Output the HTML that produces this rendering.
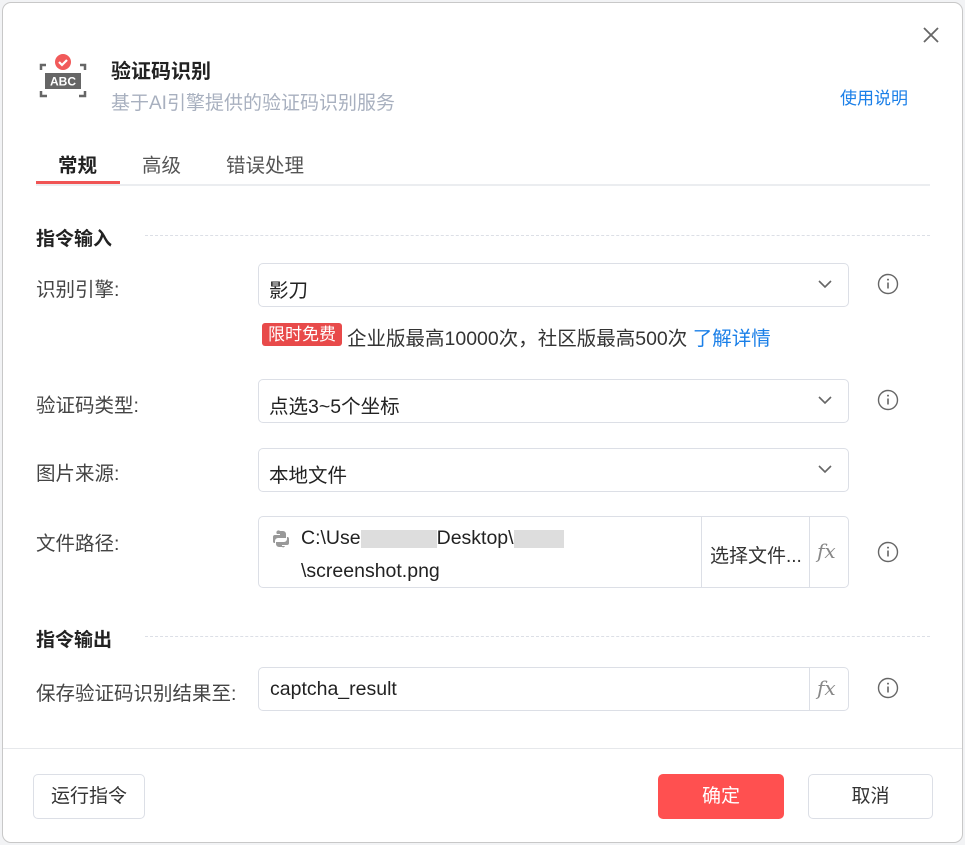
<!DOCTYPE html>
<html><head><meta charset="utf-8"><style>
*{box-sizing:border-box;margin:0;padding:0}
body{width:965px;height:845px;background:#f2f3f5;font-family:"Liberation Sans","Noto Sans CJK SC",sans-serif;color:#333;position:relative;overflow:hidden}
.dlg{position:absolute;left:2px;top:2px;width:961px;height:841px;background:#fff;border:1px solid #c8c8c8;border-radius:9px}
.a{position:absolute;white-space:nowrap}
.box{position:absolute;left:258px;width:591px;border:1px solid #dcdfe6;border-radius:5px;background:#fff}
.lbl{position:absolute;left:36px;font-size:19.5px;color:#444}
.val{position:absolute;left:10px;font-size:19.5px;color:#222}
.chev{position:absolute;right:16px;top:50%;margin-top:-6px}
.info{position:absolute;left:877px}
.dash{position:absolute;height:0;border-top:1px dashed #dcdfe6}
.btn{position:absolute;top:774px;height:45px;border-radius:5px;font-size:19px;text-align:center;line-height:43px}
.fx{position:absolute;left:558px;font-size:20px;font-style:italic;color:#888;font-family:"DejaVu Serif",serif}
</style></head><body>
<div class="dlg"></div>
<svg class="a" style="left:39px;top:53px" width="48" height="46" viewBox="0 0 48 46">
<path d="M2 17V12h5M46 17V12h-5M2 38v5h6M46 38v5h-6" stroke="#666" stroke-width="2.5" fill="none"/>
<circle cx="24" cy="9" r="8" fill="#f15a5a"/><path d="M20 9l3 3 5-5" stroke="#fff" stroke-width="2.2" fill="none"/>
<rect x="6" y="20" width="36" height="16" fill="#666"/>
<text x="24" y="32.5" font-size="12" font-weight="bold" fill="#fff" text-anchor="middle" font-family="Liberation Sans">ABC</text>
</svg>
<div class="a" style="left:111px;top:55px;font-size:20px;font-weight:bold;color:#222">验证码识别</div>
<div class="a" style="left:111px;top:88px;font-size:19px;color:#a8b0bf">基于AI引擎提供的验证码识别服务</div>
<div class="a" style="left:840px;top:84px;font-size:17px;color:#1a7fe8">使用说明</div>
<svg class="a" style="left:922px;top:26px" width="18" height="18"><path d="M2 2l14 14M16 2L2 16" stroke="#666" stroke-width="1.8"/></svg>
<div class="a" style="left:58px;top:149px;font-size:19.5px;font-weight:bold;color:#222">常规</div>
<div class="a" style="left:142px;top:149px;font-size:19.5px;color:#555">高级</div>
<div class="a" style="left:226px;top:149px;font-size:19.5px;color:#555">错误处理</div>
<div class="a" style="left:36px;top:184px;width:894px;height:2px;background:#ebedf0"></div>
<div class="a" style="left:36px;top:181px;width:84px;height:3px;background:#f05454"></div>
<div class="a" style="left:36px;top:224px;font-size:19px;font-weight:bold;color:#222">指令输入</div>
<div class="dash" style="left:145px;top:235px;width:785px"></div>

<div class="lbl" style="top:273px">识别引擎:</div>
<div class="box" style="top:263px;height:44px"><div class="val" style="top:10px">影刀</div>
<svg class="chev" width="14" height="10"><path d="M1 2l6 6 6-6" stroke="#666" stroke-width="1.6" fill="none"/></svg></div>
<svg class="info" style="top:273px" width="22" height="22"><circle cx="11" cy="11" r="9.5" stroke="#666" stroke-width="1.4" fill="none"/><path d="M11 9.5v6" stroke="#666" stroke-width="1.6"/><circle cx="11" cy="6.6" r="1" fill="#666"/></svg>
<div class="a" style="left:262px;top:323px;width:80px;height:23px;background:#e84a4a;border-radius:3px;color:#fff;font-size:17px;text-align:center;line-height:23px">限时免费</div>
<div class="a" style="left:347px;top:322px;font-size:19.5px;color:#333">企业版最高10000次，社区版最高500次 <span style="color:#1a7fe8">了解详情</span></div>

<div class="lbl" style="top:389px">验证码类型:</div>
<div class="box" style="top:379px;height:44px"><div class="val" style="top:10px">点选3~5个坐标</div>
<svg class="chev" width="14" height="10"><path d="M1 2l6 6 6-6" stroke="#666" stroke-width="1.6" fill="none"/></svg></div>
<svg class="info" style="top:389px" width="22" height="22"><circle cx="11" cy="11" r="9.5" stroke="#666" stroke-width="1.4" fill="none"/><path d="M11 9.5v6" stroke="#666" stroke-width="1.6"/><circle cx="11" cy="6.6" r="1" fill="#666"/></svg>

<div class="lbl" style="top:457px">图片来源:</div>
<div class="box" style="top:448px;height:44px"><div class="val" style="top:10px">本地文件</div>
<svg class="chev" width="14" height="10"><path d="M1 2l6 6 6-6" stroke="#666" stroke-width="1.6" fill="none"/></svg></div>

<div class="lbl" style="top:527px">文件路径:</div>
<div class="box" style="top:516px;height:72px">
<svg class="a" style="left:13px;top:13px" width="18" height="18"><path d="M8 1h3a3 3 0 0 1 3 3v4H6a3 3 0 0 0-3 3v2H2a2 2 0 0 1-1-2V7a2 2 0 0 1 2-2h5V4H5a2 2 0 0 1 3-3zM10 17H7a3 3 0 0 1-3-3v-2h8a3 3 0 0 0 3-3V7h1a2 2 0 0 1 1 2v4a2 2 0 0 1-2 2h-5v1h3a2 2 0 0 1-3 1z" fill="#999"/></svg>
<div class="val" style="left:42px;top:10px">C:\Use<span style="display:inline-block;width:76px;height:18px;background:#ddd;vertical-align:middle"></span>Desktop\<span style="display:inline-block;width:50px;height:18px;background:#ddd;vertical-align:middle"></span></div>
<div class="val" style="left:42px;top:43px">\screenshot.png</div>
<div class="a" style="left:442px;top:0;width:1px;height:70px;background:#dcdfe6"></div>
<div class="a" style="left:451px;top:24px;font-size:19px;color:#333">选择文件...</div>
<div class="a" style="left:550px;top:0;width:1px;height:70px;background:#dcdfe6"></div>
<div class="fx" style="top:22px">fx</div>
</div>
<svg class="info" style="top:541px" width="22" height="22"><circle cx="11" cy="11" r="9.5" stroke="#666" stroke-width="1.4" fill="none"/><path d="M11 9.5v6" stroke="#666" stroke-width="1.6"/><circle cx="11" cy="6.6" r="1" fill="#666"/></svg>

<div class="a" style="left:36px;top:625px;font-size:19px;font-weight:bold;color:#222">指令输出</div>
<div class="dash" style="left:145px;top:636px;width:785px"></div>

<div class="lbl" style="top:677px">保存验证码识别结果至:</div>
<div class="box" style="top:667px;height:44px"><div class="val" style="left:11px;top:10px">captcha_result</div>
<div class="a" style="left:550px;top:0;width:1px;height:42px;background:#dcdfe6"></div>
<div class="fx" style="top:8px">fx</div></div>
<svg class="info" style="top:677px" width="22" height="22"><circle cx="11" cy="11" r="9.5" stroke="#666" stroke-width="1.4" fill="none"/><path d="M11 9.5v6" stroke="#666" stroke-width="1.6"/><circle cx="11" cy="6.6" r="1" fill="#666"/></svg>

<div class="a" style="left:3px;top:748px;width:959px;height:1px;background:#e6e8eb"></div>
<div class="btn" style="left:33px;width:112px;border:1px solid #dcdfe6;color:#333">运行指令</div>
<div class="btn" style="left:658px;width:126px;background:#ff5050;color:#fff;border:1px solid #ff5050">确定</div>
<div class="btn" style="left:808px;width:125px;border:1px solid #dcdfe6;color:#333">取消</div>
</body></html>
